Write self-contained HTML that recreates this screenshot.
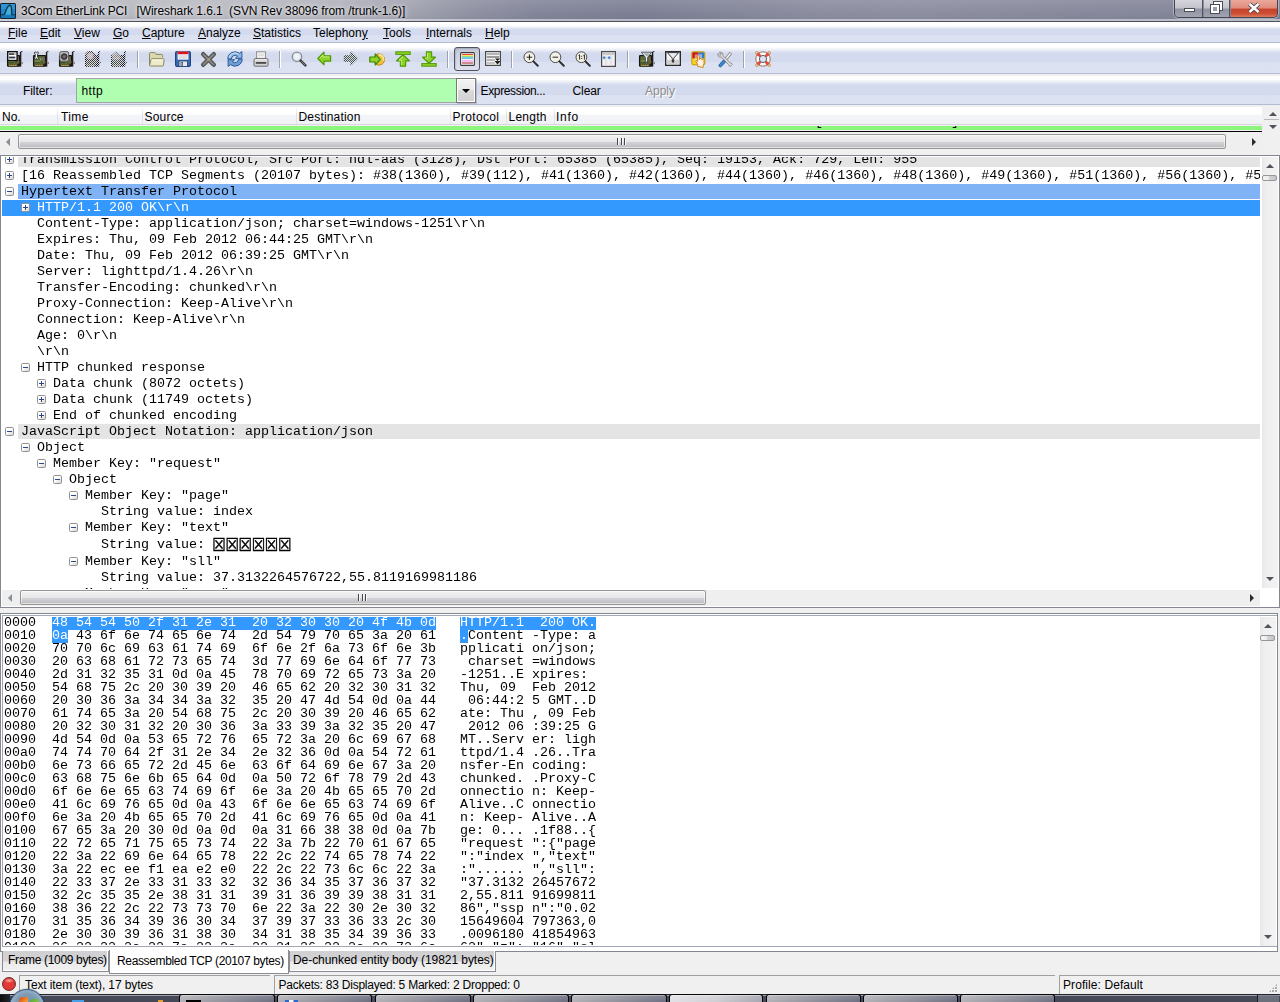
<!DOCTYPE html>
<html lang="en"><head><meta charset="utf-8"><title>3Com EtherLink PCI [Wireshark 1.6.1 (SVN Rev 38096 from /trunk-1.6)]</title>
<style>
html,body{margin:0;padding:0}
body{width:1280px;height:1002px;overflow:hidden;position:relative;background:#f0f0f0;font-family:"Liberation Sans","DejaVu Sans",sans-serif;font-size:12px;color:#000}
div,span,i,pre{box-sizing:border-box}
.abs{position:absolute}
#title{position:absolute;left:0;top:0;width:1280px;height:22px;background:linear-gradient(90deg,#b4b4bd 0,#babac2 200px,#b0b1bb 340px,#a2a3b0 410px,#9091a2 470px,#83859a 540px,#7d8095 640px,#85879b 740px,#8c8d9f 820px,#8d8ea0 920px,#898a9c 1040px,#84869a 1180px,#7f8197 1280px)}
#title .sh{position:absolute;left:0;top:0;width:1280px;height:22px;background:linear-gradient(180deg,rgba(255,255,255,.10) 0,rgba(255,255,255,0) 60%,rgba(0,0,0,.05) 100%)}
#title .l1{position:absolute;left:0;top:19px;width:1280px;height:2px;background:rgba(235,238,245,.55)}
#title .l2{position:absolute;left:0;top:21px;width:1280px;height:1px;background:#4d5058}
#title .txt{position:absolute;left:21px;top:1px;height:20px;line-height:20px;font-size:12px;white-space:pre;color:#000;text-shadow:0 0 6px rgba(255,255,255,.9),0 0 3px rgba(255,255,255,.7)}
#menubar{position:absolute;left:0;top:22px;width:1280px;height:21px;background:linear-gradient(180deg,#fff 0,#fff 3.500px,#d5dbee 7.500px,#d4daee 12.500px,#dce1f1 13.500px,#dde2f2 20px,#b4bad2 20px,#b4bad2 21px)}
#menubar span{position:absolute;top:3px;height:17px;line-height:17px;font-size:12px;white-space:pre}
#menubar u{text-decoration:underline;text-underline-offset:1px}
#toolbar{position:absolute;left:0;top:43px;width:1280px;height:31px;background:linear-gradient(180deg,#fff 0,#fff 4px,#d5dbee 10px,#d4daee 18.500px,#dce1f1 19.500px,#dde2f2 30px,#b4bad2 30px,#b4bad2 31px)}
#filterbar{position:absolute;left:0;top:76px;width:1280px;height:29px;background:linear-gradient(180deg,#fff 0,#fff 3px,#d5dbee 9px,#d4daee 18.500px,#dce1f1 19.500px,#dde2f2 28px,#b4bad2 28px,#b4bad2 29px)}
.sep{position:absolute;top:51px;width:1px;height:17px;background:#a0a0a8;box-shadow:1px 0 0 #fff}
/* tree */
#tree{position:absolute;left:0;top:155px;width:1280px;height:453px;border:1px solid #828790;background:#fff;overflow:hidden}
#treein{position:absolute;left:0;top:1px;width:1259px;height:432px;overflow:hidden;font-family:"Liberation Mono","DejaVu Sans Mono",monospace;font-size:12px}
.tr{position:absolute;white-space:pre;color:#000;padding-top:0;transform:scaleX(1.11111);transform-origin:0 0}
.tr.w{color:#fff}
.bg{position:absolute;right:0;width:auto}
.bg.g{background:#e4e4e4}
.bg.p{background:#7fb3f6}
.bg.s{background:#3399ff}
.ex{position:absolute;width:9px;height:9px;border:1px solid #919191;border-radius:1.500px;background:linear-gradient(135deg,#fff 0,#fff 40%,#d8d6cf 100%)}
.ex i{position:absolute;background:#2a4688;display:block}
.ex i.h{left:1px;top:3px;width:5px;height:1px}
.ex i.v{left:3px;top:1px;width:1px;height:5px}
.bx{position:relative;top:1px;left:-.5px;font-family:"DejaVu Sans",sans-serif;font-size:15.2px;letter-spacing:-.5px;display:inline-block;line-height:16px;transform:scale(.9,1.2);transform-origin:0 58%;vertical-align:top;-webkit-text-stroke:.35px #000}
/* hex */
#hex{position:absolute;left:0;top:613px;width:1278px;height:339px;border:1px solid #828790;background:#fff;overflow:hidden}
#hexsw{position:absolute;left:1px;top:1px;width:1275px;height:332px;border:1px solid #a3a7b3;border-right:none;background:#fff}
#hexin{position:absolute;left:0;top:0;width:1257px;height:329px;overflow:hidden}
#hexin pre{position:absolute;left:1px;top:1px;margin:0;font-family:"Liberation Mono","DejaVu Sans Mono",monospace;font-size:12px;line-height:13px;color:#000;transform:scaleX(1.11111);transform-origin:0 0}
#hexin pre b{font-weight:normal;color:#fff}
.hs{position:absolute;background:#3399ff}
/* title extras */
.appic{position:absolute;left:0;top:3px}
#capbtns{position:absolute;left:1174px;top:0;width:104px;height:18px;border:1px solid #43454f;border-top:none;border-radius:0 0 5px 5px;overflow:hidden;box-shadow:0 0 0 1px rgba(255,255,255,.35)}
.cb{position:absolute;top:0;height:18px}
.cb.min{left:0;width:28px;background:linear-gradient(180deg,#d6d6dc 0,#c2c3cc 45%,#9092a2 50%,#a4a6b4 100%);border-right:1px solid #50525c}
.cb.min i{position:absolute;left:9px;top:8px;width:11px;height:4px;background:#fff;border:1px solid #4a4c58;box-sizing:border-box}
.cb.max{left:29px;width:26px;background:linear-gradient(180deg,#d6d6dc 0,#c2c3cc 45%,#9092a2 50%,#a4a6b4 100%);border-right:1px solid #50525c}
.cb.max i{position:absolute;width:8px;height:8px;border:2px solid #fff;outline:1px solid #4a4c58;box-sizing:border-box;background:transparent}
.cb.max i.a{left:10px;top:2px}
.cb.max i.b{left:7px;top:5px;background:#9a9caa}
.cb.cls{left:56px;width:48px;background:linear-gradient(180deg,#eaa89c 0,#e08c7c 45%,#c8442c 50%,#cc4c34 75%,#e08a68 100%)}
.cb.cls svg{position:absolute;left:16px;top:2px}
/* toolbar */
.ic{position:absolute;overflow:visible}
#tgl{position:absolute;left:454px;top:47px;width:26px;height:24px;border:1px solid #50535f;border-radius:3px;background:linear-gradient(180deg,#bfc3d3 0,#cdd1df 30%,#dee1ed 100%);box-shadow:inset 1px 1px 1px rgba(0,0,0,.12)}
/* filter bar */
#filterbar .lb{position:absolute;top:7px;height:16px;line-height:16px;font-size:12px;white-space:pre}
#filterbar .lb.dis{color:#8c8c8c;text-shadow:1px 1px 0 #fff}
#fin{position:absolute;left:76px;top:2px;width:380px;height:25px;background:#b0ffb0;border:1px solid #a2a2aa;border-right:none}
#fin span{position:absolute;left:4.500px;top:4px;line-height:16px;font-size:12px;letter-spacing:.35px}
#fdd{position:absolute;left:456px;top:2px;width:20px;height:25px;border:1px solid #787878;background:linear-gradient(180deg,#f3f3f3 0,#eaeaea 48%,#dadada 50%,#d1d1d1 100%);box-shadow:inset 0 0 0 1px #fff,1px 1px 0 rgba(120,120,130,.35)}
#fdd i{position:absolute;left:5px;top:10px;width:0;height:0;border-left:4px solid transparent;border-right:4px solid transparent;border-top:4px solid #000}
/* packet list */
#plist{position:absolute;left:0;top:107px;width:1280px;height:25px}
#plist .hd{position:absolute;left:0;top:0;width:1262px;height:18px;background:linear-gradient(180deg,#fff 0,#fff 7px,#f4f5f9 8px,#f1f2f6 17px);border-bottom:1px solid #d6d8dc}
#plist .hd span{position:absolute;top:3px;line-height:15px;font-size:12px;white-space:pre}
#plist .hd i{position:absolute;top:0;width:1px;height:17px;background:linear-gradient(180deg,#fff,#dfe2e8 40%,#dfe2e8)}
#plist .grn{position:absolute;left:0;top:19px;width:1262px;height:4px;background:#8cf57c}
#plist .blk{position:absolute;left:0;top:23.500px;width:1262px;height:1.500px;background:#000}
#plist .vs{position:absolute;left:1263px;top:0;width:17px;height:25px;background:#f0f0f0}
#plist .vs b{position:absolute;left:6px;width:0;height:0;border-left:4px solid transparent;border-right:4px solid transparent}
#plist .vs b.up{top:5px;border-bottom:4px solid #50545c}
#plist .vs b.dn{top:18px;border-top:4px solid #50545c}
#plist .vs b.mid{left:1px;top:12px;width:15px;height:1px;border:none;background:#b8b8b8}
/* scrollbars */
.hsb{position:absolute;height:16px;background:#efefef}
.hsb .th{position:absolute;top:0;height:15px;border:1px solid #979797;border-radius:2px;background:linear-gradient(180deg,#f3f3f3 0,#e6e6e8 52%,#d2d2d6 58%,#c4c4c8 85%,#b9b9bd 100%);box-shadow:inset 0 0 0 1px rgba(255,255,255,.55)}
.hsb .th em{position:absolute;left:50%;top:3px;width:10px;height:7px;margin-left:-5px;background:linear-gradient(90deg,#45454a 0,#45454a 1px,#f8f8f8 1px,#f8f8f8 2px,transparent 2px,transparent 3.500px,#45454a 3.500px,#45454a 4.500px,#f8f8f8 4.500px,#f8f8f8 5.500px,transparent 5.500px,transparent 7px,#45454a 7px,#45454a 8px,#f8f8f8 8px,#f8f8f8 9px,transparent 9px)}
.hsb b{position:absolute;top:4px;width:0;height:0;border-top:4px solid transparent;border-bottom:4px solid transparent}
.hsb b.la{left:6px;border-right:4px solid #8a8e96}
.hsb b.ra{right:6px;border-left:4px solid #2a2c34}
.vsb{position:absolute;width:17px;background:linear-gradient(90deg,#e8e8e8 0,#efefef 30%,#f2f2f2 100%)}
.vsb b{position:absolute;left:4px;width:0;height:0;border-left:4px solid transparent;border-right:4px solid transparent}
.vsb b.ua{top:7px;border-bottom:4px solid #50545c}
.vsb b.da{bottom:7px;border-top:4px solid #50545c}
.vsb .vth{position:absolute;left:0;width:16px;height:6px;border:1px solid #979797;border-radius:2px;background:linear-gradient(90deg,#f5f5f5 0,#ebebeb 45%,#d2d2d6 50%,#c4c4c8 100%)}
/* tabs */
#tabs{position:absolute;left:0;top:950px;width:1280px;height:25px}
.tab{position:absolute;top:1px;height:21px;border:1px solid #898c95;border-top:none;background:linear-gradient(180deg,#d0d0d3 0,#d3d3d6 10px,#ebebeb 11px,#f0f0f0 19px,#fff 19px,#fff 20px);box-shadow:inset -1px 0 0 #fff}
.tab.act{top:0;height:24px;background:#fff;border-color:#898c95;box-shadow:none}
.tab span{position:absolute;top:1px;line-height:16px;font-size:12px;white-space:pre}
.tab.act span{top:3px}
/* status */
#status{position:absolute;left:0;top:975px;width:1280px;height:19px}
.led{position:absolute;left:2px;top:2px;width:14px;height:14px;border-radius:7px;background:radial-gradient(ellipse 5px 2.500px at 50% 22%,rgba(255,190,185,.85) 0,rgba(255,150,145,0) 100%),radial-gradient(circle at 50% 50%,#e43a36 0,#e03834 65%,#c82c2a 100%);border:1px solid #6a2a22}
.sf{position:absolute;top:0;height:19px;border-left:1px solid #a0a0a0;border-top:1px solid #a0a0a0;background:#f0f0f0}
.sf span{position:absolute;top:2px;line-height:15px;font-size:12px;white-space:pre}
.grip{position:absolute;right:3px;bottom:2px;width:8px;height:8px;background:radial-gradient(circle at 1px 1px,#a8a8a8 0,#a8a8a8 .9px,transparent 1.100px) 0 0/3px 3px;clip-path:polygon(100% 0,100% 100%,0 100%)}
/* taskbar */
#taskbar{position:absolute;left:0;top:994px;width:1280px;height:8px;background:linear-gradient(180deg,#20262a 0,#20262a 1px,#a4a4b0 1px,#a4a4b0 2px,#474a58 2px,#454856 8px)}
#taskbar .lft{position:absolute;left:0;top:1px;width:10px;height:7px;background:linear-gradient(90deg,#0c0c10,#24262c)}
#taskbar .tb{position:absolute;top:0;height:8px;border:1px solid #08080a;border-bottom:none;border-radius:3px 3px 0 0;background:linear-gradient(180deg,rgba(255,255,255,.55) 0,rgba(255,255,255,.12) 1.500px,rgba(255,255,255,0) 7px),linear-gradient(90deg,#b2b2b8 0,#92939c 45%,#6c6e80 100%)}
#taskbar .tb.a{background:linear-gradient(180deg,rgba(255,255,255,.6) 0,rgba(255,255,255,.1) 1.500px,rgba(255,255,255,0) 7px),linear-gradient(90deg,#e2e2e6 0,#cfcfd4 50%,#a6a7b0 100%)}
#taskbar .orb{position:absolute;left:9px;top:-5px;width:36px;height:36px;border-radius:18px;background:radial-gradient(circle at 50% 45%,#6e8eac 0,#7f9cb6 45%,#a9bece 75%,#c2d0dc 100%);border:1px solid #2a5888;box-shadow:0 0 1px #0a1420}
#taskbar .orb i{position:absolute;display:block}
#taskbar .orb i.r{left:9px;top:7px;width:9px;height:8px;border-radius:3px 2px 0 0;background:linear-gradient(135deg,#d84a20 0,#f08a28 60%,#f0b040 100%);transform:skewY(-8deg)}
#taskbar .orb i.g{left:20px;top:9px;width:9px;height:6px;border-radius:2px 3px 0 0;background:linear-gradient(135deg,#5aa838 0,#8cc850 100%);transform:skewY(-8deg)}
#taskbar .ti{position:absolute;top:6px;height:2px}
#taskbar .sd{position:absolute;left:1257px;top:1px;width:22px;height:7px;background:linear-gradient(180deg,#9a9ca6 0,#70737f 1px,#6a6d7a 7px);border-left:1px solid #1a1c22}
#plist .clip{position:absolute;left:814.5px;top:19px;width:160px;height:2px;overflow:hidden}
#plist .clip span{position:absolute;left:0;top:-12px;line-height:16px;white-space:pre;font-family:"Liberation Mono","DejaVu Sans Mono",monospace;font-size:12px;transform:scaleX(1.11111);transform-origin:0 0}
#taskbar .tb i{position:absolute;bottom:0;height:2px;display:block}

</style></head><body>
<div id="title"><div class="sh"></div><div class="l1"></div><div class="l2"></div>
<svg class="appic" width="16" height="16" viewBox="0 0 16 16"><rect x="0" y="0" width="16" height="16" rx="1.500" fill="#10222e"/><rect x="1" y="1" width="14" height="14" rx=".8" fill="#1c88cf"/><rect x="1" y="1" width="14" height="5" fill="#3a9bd8" opacity=".6"/><path d="M5.500 11.600C6.600 7.600 7.800 4.200 10 3.200c.8 2.800.9 5.600.9 8.400z" fill="#4fb4da" opacity=".85"/><path d="M1 11.800h2.600C5.600 11.800 6 2.800 10 2.200c1.500 0 1.700 2.900 1.900 9.600H15" fill="none" stroke="#14323e" stroke-width="1.200"/><rect x="1" y="12.500" width="14" height="2.500" fill="#1678b8"/></svg>
<div class="txt" style="left:21px;letter-spacing:-.18px">3Com EtherLink PCI</div><div class="txt" style="left:136.500px;letter-spacing:-.08px">[Wireshark 1.6.1  (SVN Rev 38096 from /trunk-1.6)]</div>
<div id="capbtns"><div class="cb min"><i></i></div><div class="cb max"><i class="a"></i><i class="b"></i></div><div class="cb cls"><svg width="14" height="12" viewBox="0 0 14 12"><path d="M2.500 2l9 8M11.500 2l-9 8" stroke="#3a3a44" stroke-width="4.200" stroke-linecap="butt"/><path d="M2.500 2l9 8M11.500 2l-9 8" stroke="#fff" stroke-width="2.600" stroke-linecap="butt"/></svg></div></div>
</div>
<div id="menubar">
<span style="left:8px"><u>F</u>ile</span><span style="left:40px"><u>E</u>dit</span><span style="left:74px"><u>V</u>iew</span><span style="left:113px"><u>G</u>o</span><span style="left:142px"><u>C</u>apture</span><span style="left:198px"><u>A</u>nalyze</span><span style="left:253px"><u>S</u>tatistics</span><span style="left:313px">Telephon<u>y</u></span><span style="left:383px"><u>T</u>ools</span><span style="left:426px"><u>I</u>nternals</span><span style="left:485px"><u>H</u>elp</span>
</div>
<div id="toolbar"></div>
<div id="tgl"></div>
<svg width="0" height="0" style="position:absolute"><defs><pattern id="chk" width="2" height="2" patternUnits="userSpaceOnUse"><rect width="2" height="2" fill="#000"/><rect width="1" height="1" fill="#fff"/><rect x="1" y="1" width="1" height="1" fill="#fff"/></pattern><mask id="dis" maskUnits="userSpaceOnUse" x="0" y="0" width="16" height="16"><rect width="16" height="16" fill="url(#chk)"/></mask></defs></svg>
<svg class="ic" style="left:7px;top:51px" width="16" height="16" viewBox="0 0 16 16"><rect x="0.6" y="4.6" width="12" height="10.6" rx="0.6" fill="#5e6d37" stroke="#161616" stroke-width="1.3"/>
<rect x="1.6" y="9.6" width="5.4" height=".9" fill="#8a965a"/><rect x="1.8" y="11.3" width="5" height="1" fill="#3c4726"/><rect x="8.4" y="10" width="1" height="3" fill="#454f2c"/><rect x="10.4" y="12.8" width="2" height="2.2" fill="#1c1c1c"/>
<rect x="2" y="13.6" width="8" height="1.4" fill="#1c1c1c"/><path d="M2.2 14.3h7.6" stroke="#e2c050" stroke-width="1.2" stroke-dasharray="1.4 .6"/>
<rect x="10.6" y="7.6" width="1" height="1.4" fill="#c8407a"/><rect x="12" y="10.4" width="1" height="1.2" fill="#b03060"/>
<path d="M13.6 .8v14.8" stroke="#1c1c1c" stroke-width="1.4"/><path d="M13.6 1.2q.6-.8 1.8-.6" stroke="#1c1c1c" stroke-width="1" fill="none"/>
<rect x="14.2" y="11" width="1.8" height="2" fill="#8a8a8a"/><rect x=".7" y=".7" width="9.4" height="8.8" fill="#fff" stroke="#111" stroke-width="1.4"/>
<rect x="2" y="2.2" width="5.4" height="1.8" fill="#4a4a4a"/><rect x="2" y="5.6" width="6" height="1.8" fill="#333"/><rect x="1.6" y="5.8" width=".8" height="1.4" fill="#3a8ad8"/><rect x="7.8" y="5.8" width=".8" height="1.4" fill="#3a8ad8"/><rect x="8" y="2.4" width=".8" height="1.4" fill="#999"/></svg>
<svg class="ic" style="left:33px;top:51px" width="16" height="16" viewBox="0 0 16 16"><rect x="0.6" y="4.6" width="12" height="10.6" rx="0.6" fill="#5e6d37" stroke="#161616" stroke-width="1.3"/>
<rect x="1.6" y="9.6" width="5.4" height=".9" fill="#8a965a"/><rect x="1.8" y="11.3" width="5" height="1" fill="#3c4726"/><rect x="8.4" y="10" width="1" height="3" fill="#454f2c"/><rect x="10.4" y="12.8" width="2" height="2.2" fill="#1c1c1c"/>
<rect x="2" y="13.6" width="8" height="1.4" fill="#1c1c1c"/><path d="M2.2 14.3h7.6" stroke="#e2c050" stroke-width="1.2" stroke-dasharray="1.4 .6"/>
<rect x="10.6" y="7.6" width="1" height="1.4" fill="#c8407a"/><rect x="12" y="10.4" width="1" height="1.2" fill="#b03060"/>
<path d="M13.6 .8v14.8" stroke="#1c1c1c" stroke-width="1.4"/><path d="M13.6 1.2q.6-.8 1.8-.6" stroke="#1c1c1c" stroke-width="1" fill="none"/>
<rect x="14.2" y="11" width="1.8" height="2" fill="#8a8a8a"/><path d="M2.2 .8l1.2 1 1.2-1 .9 1.2-.9 1.1v3l.9 1.1-.9 1.2-1.2-1-1.2 1-.9-1.2.9-1.1v-3L1.3 2z" fill="#fff" stroke="#222" stroke-width=".9"/>
<rect x="7" y="7.4" width=".9" height="1.8" fill="#aab"/><rect x="8.8" y="7.4" width=".9" height="1.8" fill="#88a"/></svg>
<svg class="ic" style="left:59px;top:51px" width="16" height="16" viewBox="0 0 16 16"><rect x="0.6" y="4.6" width="12" height="10.6" rx="0.6" fill="#5e6d37" stroke="#161616" stroke-width="1.3"/>
<rect x="1.6" y="9.6" width="5.4" height=".9" fill="#8a965a"/><rect x="1.8" y="11.3" width="5" height="1" fill="#3c4726"/><rect x="8.4" y="10" width="1" height="3" fill="#454f2c"/><rect x="10.4" y="12.8" width="2" height="2.2" fill="#1c1c1c"/>
<rect x="2" y="13.6" width="8" height="1.4" fill="#1c1c1c"/><path d="M2.2 14.3h7.6" stroke="#e2c050" stroke-width="1.2" stroke-dasharray="1.4 .6"/>
<rect x="10.6" y="7.6" width="1" height="1.4" fill="#c8407a"/><rect x="12" y="10.4" width="1" height="1.2" fill="#b03060"/>
<path d="M13.6 .8v14.8" stroke="#1c1c1c" stroke-width="1.4"/><path d="M13.6 1.2q.6-.8 1.8-.6" stroke="#1c1c1c" stroke-width="1" fill="none"/>
<rect x="14.2" y="11" width="1.8" height="2" fill="#8a8a8a"/><rect x=".8" y=".6" width="8.8" height="9.6" rx="1.6" fill="#bdbdbd" stroke="#5a5a5a" stroke-width="1"/>
<circle cx="5.2" cy="5.6" r="2.9" fill="#4a4a4a" stroke="#222" stroke-width=".8"/><circle cx="5.2" cy="5.6" r="1.3" fill="#777"/><rect x="4.8" y="5.8" width=".9" height=".9" fill="#d03070"/></svg>
<svg class="ic" style="left:85px;top:51px" width="16" height="16" viewBox="0 0 16 16"><g mask="url(#dis)"><g style="filter:saturate(.55) brightness(.72)"><rect x="0.6" y="4.6" width="12" height="10.6" rx="0.6" fill="#5e6d37" stroke="#161616" stroke-width="1.3"/>
<rect x="1.6" y="9.6" width="5.4" height=".9" fill="#8a965a"/><rect x="1.8" y="11.3" width="5" height="1" fill="#3c4726"/><rect x="8.4" y="10" width="1" height="3" fill="#454f2c"/><rect x="10.4" y="12.8" width="2" height="2.2" fill="#1c1c1c"/>
<rect x="2" y="13.6" width="8" height="1.4" fill="#1c1c1c"/><path d="M2.2 14.3h7.6" stroke="#e2c050" stroke-width="1.2" stroke-dasharray="1.4 .6"/>
<rect x="10.6" y="7.6" width="1" height="1.4" fill="#c8407a"/><rect x="12" y="10.4" width="1" height="1.2" fill="#b03060"/>
<path d="M13.6 .8v14.8" stroke="#1c1c1c" stroke-width="1.4"/><path d="M13.6 1.2q.6-.8 1.8-.6" stroke="#1c1c1c" stroke-width="1" fill="none"/>
<rect x="14.2" y="11" width="1.8" height="2" fill="#8a8a8a"/><circle cx="5.200" cy="5.200" r="5" fill="#b2481e" stroke="#5a2a10" stroke-width=".8"/><circle cx="5.200" cy="5" r="3.200" fill="#f6dcd4"/><circle cx="5.200" cy="5" r="1.600" fill="#fff"/></g></g></svg>
<svg class="ic" style="left:111px;top:51px" width="16" height="16" viewBox="0 0 16 16"><g mask="url(#dis)"><g style="filter:saturate(.55) brightness(.72)"><rect x="0.6" y="4.6" width="12" height="10.6" rx="0.6" fill="#5e6d37" stroke="#161616" stroke-width="1.3"/>
<rect x="1.6" y="9.6" width="5.4" height=".9" fill="#8a965a"/><rect x="1.8" y="11.3" width="5" height="1" fill="#3c4726"/><rect x="8.4" y="10" width="1" height="3" fill="#454f2c"/><rect x="10.4" y="12.8" width="2" height="2.2" fill="#1c1c1c"/>
<rect x="2" y="13.6" width="8" height="1.4" fill="#1c1c1c"/><path d="M2.2 14.3h7.6" stroke="#e2c050" stroke-width="1.2" stroke-dasharray="1.4 .6"/>
<rect x="10.6" y="7.6" width="1" height="1.4" fill="#c8407a"/><rect x="12" y="10.4" width="1" height="1.2" fill="#b03060"/>
<path d="M13.6 .8v14.8" stroke="#1c1c1c" stroke-width="1.4"/><path d="M13.6 1.2q.6-.8 1.8-.6" stroke="#1c1c1c" stroke-width="1" fill="none"/>
<rect x="14.2" y="11" width="1.8" height="2" fill="#8a8a8a"/><path d="M1 9V4.5L5 .8l4.2 3.7V9z" fill="#d8d8d8" stroke="#666" stroke-width=".8"/><path d="M2 6.2l1.6-1.6 1.6 1.6 1.6-1.6 1.6 1.6" stroke="#f0a030" stroke-width="1.4" fill="none"/><rect x="7.6" y="8" width="1" height="1" fill="#d03070"/></g></g></svg>
<svg class="ic" style="left:148px;top:51px" width="16" height="16" viewBox="0 0 16 16"><path d="M1.5 14.2V2.6q0-1 1-1h4q.9 0 1.2.9l.3.9h5.6q1 0 1 1v2" fill="#d9d8b0" stroke="#8b865c" stroke-width="1"/>
<path d="M1.5 14.4q0 .6.7.6h12.4q.8 0 .9-.8l.6-5.6q.1-.9-.9-.9H4.200q-.9 0-1.100.9z" fill="#ecebcc" stroke="#8b865c" stroke-width="1"/>
<path d="M3.600 9h11.400" stroke="#fbfbe8" stroke-width="1"/></svg>
<svg class="ic" style="left:175px;top:51px" width="16" height="16" viewBox="0 0 16 16"><rect x=".6" y=".6" width="14.8" height="14.8" rx="1.4" fill="#3f6fb5" stroke="#1d4488" stroke-width="1.2"/>
<rect x="2.600" y="0.6" width="10.800" height="8" fill="#f4f4f4"/><rect x="2.600" y=".6" width="10.800" height="2.600" fill="#d8141c"/>
<path d="M3.600 5h8.800M3.600 6.800h8.800" stroke="#c8c8c8" stroke-width=".8"/>
<rect x="4" y="10" width="8.400" height="5.400" fill="#e8e8e8" stroke="#1d3f7a" stroke-width=".8"/><rect x="5.600" y="11.200" width="2.400" height="3.400" fill="#2a3a55"/><rect x="6.300" y="11.800" width="1" height="2.200" fill="#dde"/></svg>
<svg class="ic" style="left:201px;top:51px" width="16" height="16" viewBox="0 0 16 16"><path d="M2.200 3.200L12.800 13.800M12.800 3.200L2.200 13.800" stroke="#4a4a4a" stroke-width="4.400" stroke-linecap="round"/>
<path d="M2.400 3.400L12.600 13.600M12.600 3.400L2.400 13.600" stroke="#7a7a7a" stroke-width="2.600" stroke-linecap="round"/>
<path d="M3 4l9 9M12 4l-9 9" stroke="#8c8c84" stroke-width="1" stroke-linecap="round"/><circle cx="7.500" cy="8.500" r="1" fill="#b8b070"/></svg>
<svg class="ic" style="left:227px;top:51px" width="16" height="16" viewBox="0 0 16 16"><path d="M.8 8A7.200 7.200 0 0 1 12.400 2.300L14.900.600V7.300H8.400L10.500 5.100A3.800 3.800 0 0 0 4.400 8z" fill="#8db7e2" stroke="#2a5c9e" stroke-width="1" stroke-linejoin="round"/>
<path d="M15.200 8A7.200 7.200 0 0 1 3.600 13.700L1.100 15.400V8.700H7.600L5.500 10.900A3.800 3.800 0 0 0 11.600 8z" fill="#6f9fd2" stroke="#2a5c9e" stroke-width="1" stroke-linejoin="round"/>
<path d="M2.200 7A5.800 5.800 0 0 1 11.600 3.300" stroke="#d6e6f6" stroke-width="1" fill="none"/></svg>
<svg class="ic" style="left:253px;top:51px" width="16" height="16" viewBox="0 0 16 16"><rect x="3.600" y=".8" width="8.800" height="7" fill="#fbfbfb" stroke="#8a8a8a" stroke-width="1"/><path d="M5.200 3h5.600M5.200 4.800h5.600" stroke="#c8c8c8" stroke-width=".9"/>
<path d="M1 14.400V9.200q0-1.800 1.800-1.800h10.400q1.800 0 1.800 1.800v5.200q0 .8-.8.800H1.800q-.8 0-.8-.8z" fill="#d4d4d4" stroke="#6e6e6e" stroke-width="1"/>
<rect x="2.800" y="11" width="10.400" height="1.800" fill="#4a4a4a"/><path d="M2 8.800h12" stroke="#f4f4f4" stroke-width="1"/></svg>
<svg class="ic" style="left:291px;top:51px" width="16" height="16" viewBox="0 0 16 16"><circle cx="6" cy="5.800" r="4.700" fill="#eef4fa" stroke="#8a8e94" stroke-width="1.400"/><path d="M3.400 5.200a2.800 2.800 0 0 1 2.800-2.400" stroke="#fff" stroke-width="1.400" fill="none"/><circle cx="6" cy="5.800" r="3.400" fill="none" stroke="#cfe0ee" stroke-width="1"/>
<path d="M9.600 9.600l4.800 4.800" stroke="#3a3a3a" stroke-width="2.600" stroke-linecap="round"/><path d="M10.400 10.400l3.600 3.600" stroke="#8a8a8a" stroke-width=".9" stroke-linecap="round"/></svg>
<svg class="ic" style="left:317px;top:51px" width="16" height="16" viewBox="0 0 16 16"><path d="M.8 7.500L7 1.200v3.600h6.600v5.400H7v3.600z" fill="#8ed22a" stroke="#4f9a06" stroke-width="1.200" stroke-linejoin="round"/><path d="M2.600 7.400l3.400-3.500v2h6.400" stroke="#c4ee78" stroke-width="1" fill="none"/></svg>
<svg class="ic" style="left:343px;top:51px" width="16" height="16" viewBox="0 0 16 16"><g mask="url(#dis)"><g style="filter:saturate(.55) brightness(.72)"><path d="M14.200 7.500L8 1.200v3.600H1.400v5.400H8v3.600z" fill="#6a7f52" stroke="#4a6a30" stroke-width="1.200" stroke-linejoin="round"/></g></g></svg>
<svg class="ic" style="left:369px;top:51px" width="16" height="16" viewBox="0 0 16 16"><circle cx="10" cy="8.500" r="5.600" fill="#f0c040" stroke="#c08810" stroke-width="1"/><path d="M10 3.600a5 5 0 0 1 4.600 6" stroke="#fbe9a0" stroke-width="1.600" fill="none"/>
<path d="M11.200 8.500L6.200 3v3H.8v5h5.400v3z" fill="#8ed22a" stroke="#3f8a06" stroke-width="1.200" stroke-linejoin="round"/></svg>
<svg class="ic" style="left:395px;top:51px" width="16" height="16" viewBox="0 0 16 16"><rect x=".8" y=".8" width="14.400" height="2.600" fill="#8ed22a" stroke="#4f9a06" stroke-width="1"/><path d="M8 3.800l6.400 6H10.600v5.400H5.400V9.800H1.600z" fill="#8ed22a" stroke="#4f9a06" stroke-width="1.200" stroke-linejoin="round"/><path d="M8 5.600L4 9.200h2.400v5" stroke="#c4ee78" stroke-width="1" fill="none"/></svg>
<svg class="ic" style="left:421px;top:51px" width="16" height="16" viewBox="0 0 16 16"><rect x=".8" y="12.600" width="14.400" height="2.600" fill="#8ed22a" stroke="#4f9a06" stroke-width="1"/><path d="M8 12.200l6.400-6H10.600V.8H5.400v5.400H1.600z" fill="#8ed22a" stroke="#4f9a06" stroke-width="1.200" stroke-linejoin="round"/><path d="M6.400 1.800v5.400H4" stroke="#c4ee78" stroke-width="1" fill="none"/></svg>
<svg class="ic" style="left:459px;top:51px" width="16" height="16" viewBox="0 0 16 16"><rect x="1.600" y="1.600" width="13.800" height="12.800" rx="1" fill="#fff" stroke="#3a3a3a" stroke-width="1.100"/>
<rect x="3" y="3" width="11" height="1.100" fill="#e84040"/><rect x="3" y="4.100" width="11" height="1.200" fill="#f4ec50"/><rect x="3" y="5.300" width="11" height="1" fill="#70c860"/><rect x="3" y="6.300" width="11" height="1.700" fill="#60c4e4"/><rect x="3" y="8.800" width="11" height="2" fill="#f4b4f4"/><rect x="3" y="11.400" width="11" height="1.200" fill="#a84848"/></svg>
<svg class="ic" style="left:485px;top:51px" width="16" height="16" viewBox="0 0 16 16"><rect x=".6" y=".6" width="14.800" height="13.800" fill="#f4f4f4" stroke="#4a4a4a" stroke-width="1.200"/>
<rect x="1.800" y="2" width="12.400" height="2" fill="#b4b4b4"/><rect x="1.800" y="5" width="12.400" height="2" fill="#9a9a9a"/><rect x="1.800" y="8" width="8" height="2" fill="#b4b4b4"/><rect x="1.800" y="11" width="8" height="2" fill="#c4c4c4"/>
<path d="M10 7.400h5l-2.500 2.600zM10 10.600h5l-2.500 2.800z" fill="#1a1a1a"/><rect x="10" y="10" width="5" height=".9" fill="#1a1a1a"/></svg>
<svg class="ic" style="left:523px;top:51px" width="16" height="16" viewBox="0 0 16 16"><circle cx="6.400" cy="6.200" r="5.400" fill="#f4f2e6" stroke="#4a4a4a" stroke-width="1"/><path d="M10.400 10.400l4.400 4.400" stroke="#2e2e2e" stroke-width="2" stroke-linecap="round"/><path d="M3.600 6.200h5.600M6.400 3.400v5.600" stroke="#222" stroke-width="1"/></svg>
<svg class="ic" style="left:549px;top:51px" width="16" height="16" viewBox="0 0 16 16"><circle cx="6.400" cy="6.200" r="5.400" fill="#f4f2e6" stroke="#4a4a4a" stroke-width="1"/><path d="M10.400 10.400l4.400 4.400" stroke="#2e2e2e" stroke-width="2" stroke-linecap="round"/><path d="M3.600 6.200h5.600" stroke="#222" stroke-width="1"/></svg>
<svg class="ic" style="left:575px;top:51px" width="16" height="16" viewBox="0 0 16 16"><circle cx="6.400" cy="6.200" r="5.400" fill="#f4f2e6" stroke="#4a4a4a" stroke-width="1"/><path d="M10.400 10.400l4.400 4.400" stroke="#2e2e2e" stroke-width="2" stroke-linecap="round"/><path d="M3.600 4.400l1-.6v4.800M8.400 4.400l1-.6v4.800" stroke="#222" stroke-width="1" fill="none"/><rect x="6.200" y="4.800" width="1" height="1" fill="#222"/><rect x="6.200" y="7" width="1" height="1" fill="#222"/></svg>
<svg class="ic" style="left:601px;top:51px" width="16" height="16" viewBox="0 0 16 16"><rect x=".6" y=".6" width="13.800" height="14.800" fill="#f0f0f0" stroke="#4a4a4a" stroke-width="1.200"/><rect x="1.200" y="1.200" width="12.600" height="2.600" fill="#c0c0c0"/>
<path d="M5 1.200v13.600M10 1.200v13.600" stroke="#d8d8d8" stroke-width="1"/><path d="M1.600 6.800h3M3.100 5.300v3M6.600 6.800h3M8.100 5.300v3" stroke="#2a78d8" stroke-width="1.100"/></svg>
<svg class="ic" style="left:639px;top:51px" width="16" height="16" viewBox="0 0 16 16"><rect x="0.6" y="4.6" width="12" height="10.6" rx="0.6" fill="#5e6d37" stroke="#161616" stroke-width="1.3"/>
<rect x="1.6" y="9.6" width="5.4" height=".9" fill="#8a965a"/><rect x="1.8" y="11.3" width="5" height="1" fill="#3c4726"/><rect x="8.4" y="10" width="1" height="3" fill="#454f2c"/><rect x="10.4" y="12.8" width="2" height="2.2" fill="#1c1c1c"/>
<rect x="2" y="13.6" width="8" height="1.4" fill="#1c1c1c"/><path d="M2.2 14.3h7.6" stroke="#e2c050" stroke-width="1.2" stroke-dasharray="1.4 .6"/>
<rect x="10.6" y="7.6" width="1" height="1.4" fill="#c8407a"/><rect x="12" y="10.4" width="1" height="1.2" fill="#b03060"/>
<path d="M13.6 .8v14.8" stroke="#1c1c1c" stroke-width="1.4"/><path d="M13.6 1.2q.6-.8 1.8-.6" stroke="#1c1c1c" stroke-width="1" fill="none"/>
<rect x="14.2" y="11" width="1.8" height="2" fill="#8a8a8a"/><path d="M2.400 1.200h10.200L8.600 6.400V11H6.400V6.400z" fill="#e8eef2" stroke="#4a4a4a" stroke-width=".9"/><path d="M4.600 2.200h6L8 5.600z" fill="#9aa"/></svg>
<svg class="ic" style="left:665px;top:51px" width="16" height="16" viewBox="0 0 16 16"><rect x=".7" y=".7" width="14.600" height="13.600" fill="#f6f6f6" stroke="#2a2a2a" stroke-width="1.400"/><rect x="1.600" y="8.800" width="12.800" height="4.600" fill="#d0d0d0"/>
<path d="M2.400 1.600h11.200L8.700 7.200v4H7.300v-4z" fill="#e8eef2" stroke="#3a3a3a" stroke-width="1"/><rect x="7.300" y="9" width="1.400" height="1.600" fill="#222"/></svg>
<svg class="ic" style="left:691px;top:51px" width="16" height="16" viewBox="0 0 16 16"><rect x=".8" y=".8" width="13" height="13" rx="1.200" fill="#f6d028" stroke="#c09a10" stroke-width="1"/><rect x="1.400" y="1.400" width="6" height="6" fill="#cc1010"/><rect x="7.400" y="1.400" width="5.800" height="6" fill="#3a78c8"/><rect x="3.600" y="3.400" width="7.400" height="6.200" fill="#e8eef8" opacity=".55"/>
<path d="M6.600 15.400v-2.200L5 10.600q-.6-1 .4-1.200l1.200 1.200V5.600q0-1 .9-1t.9 1v3.200l.2-1.200q.9-.3 1.500.5.900-.3 1.500.5.900-.2 1.400.7v3.200l-.8 2v1.900z" fill="#fff4e6" stroke="#d88410" stroke-width="1"/></svg>
<svg class="ic" style="left:717px;top:51px" width="16" height="16" viewBox="0 0 16 16"><path d="M12.800 1.200L7 8.400 2.600 13.200q-.8 1 .2 1.800t1.800-.2L9 9.800 14.600 3z" fill="#e8e8e8" stroke="#8a8a8a" stroke-width="1"/>
<path d="M2 1.400q2-.8 3.400.6.900 1.200.4 2.400l7.400 7.600q1.600-.2 2.200 1.200l-1.800 2.200q-1.800-.2-2-1.800L4.200 6q-1.600.6-2.800-.6Q.4 4 1 2.600l1.600 1.600 1.200-.4.400-1.200z" fill="#dcdcdc" stroke="#8a8a8a" stroke-width=".9"/>
<path d="M6.600 9.200l-4.400 4.600q-.8 1 .2 1.800t1.800-.2l4.400-4.400z" fill="#3a8ad8" stroke="#1d5a9a" stroke-width=".9"/></svg>
<svg class="ic" style="left:755px;top:51px" width="16" height="16" viewBox="0 0 16 16"><circle cx="8" cy="8" r="7.200" fill="#fafafa" stroke="#a8a8a8" stroke-width="1"/>
<g fill="#ea4a3c"><path d="M8 8L11.880 1A8 8 0 0 1 15 4.120z" transform="rotate(0 8 8)"/><path d="M8 8L11.880 1A8 8 0 0 1 15 4.120z" transform="rotate(90 8 8)"/><path d="M8 8L11.880 1A8 8 0 0 1 15 4.120z" transform="rotate(180 8 8)"/><path d="M8 8L11.880 1A8 8 0 0 1 15 4.120z" transform="rotate(270 8 8)"/></g>
<circle cx="8" cy="8" r="7.200" fill="none" stroke="#b06a50" stroke-width=".8" opacity=".7"/>
<circle cx="8" cy="8" r="3.600" fill="#dde3f3" stroke="#5a5e66" stroke-width="1"/>
<g fill="none" stroke="#c89040" stroke-width=".9"><circle cx="1.800" cy="1.800" r="1.300"/><circle cx="14.200" cy="1.800" r="1.300"/><circle cx="1.800" cy="14.200" r="1.300"/><circle cx="14.200" cy="14.200" r="1.300"/></g></svg>
<div class="sep" style="left:137px"></div>
<div class="sep" style="left:279px"></div>
<div class="sep" style="left:447px"></div>
<div class="sep" style="left:511px"></div>
<div class="sep" style="left:627px"></div>
<div class="sep" style="left:743px"></div>
<div id="filterbar">
<span class="lb" style="left:23px;letter-spacing:-.08px">Filter:</span>
<div id="fin"><span>http</span></div>
<div id="fdd"><i></i></div>
<span class="lb" style="left:480.500px;letter-spacing:-.35px">Expression...</span><span class="lb" style="left:572.500px;letter-spacing:-.1px">Clear</span><span class="lb dis" style="left:645px">Apply</span>
</div>
<div id="plist">
<div class="hd"><span style="left:2px">No.</span><span style="left:61px;letter-spacing:.4px">Time</span><span style="left:144.500px;letter-spacing:.2px">Source</span><span style="left:298.500px;letter-spacing:.18px">Destination</span><span style="left:452.500px;letter-spacing:.35px">Protocol</span><span style="left:508.500px;letter-spacing:.25px">Length</span><span style="left:556px;letter-spacing:.7px">Info</span>
<i style="left:57px"></i><i style="left:142px"></i><i style="left:296px"></i><i style="left:450px"></i><i style="left:506px"></i><i style="left:554px"></i></div>
<div class="grn"></div><div class="blk"></div><div class="clip"><span>[TCP Out-Of-Order]</span></div>
<div class="vs"><b class="up"></b><b class="mid"></b><b class="dn"></b></div>
</div>
<div class="hsb" style="left:0;top:134px;width:1262px"><b class="la"></b><div class="th" style="left:18px;width:1208px"><em></em></div><b class="ra"></b></div>
<div id="tree"><div id="treein">
<div class="bg g" style="left:17px;top:-5px;height:15px"></div><div class="ex" style="left:4px;top:-2px"><i class="h"></i><i class="v"></i></div><div class="tr" style="left:20px;top:-5px;height:16px;line-height:16px">Transmission Control Protocol, Src Port: ndl-aas (3128), Dst Port: 65385 (65385), Seq: 19153, Ack: 729, Len: 955</div>
<div class="ex" style="left:4px;top:14px"><i class="h"></i><i class="v"></i></div><div class="tr" style="left:20px;top:11px;height:16px;line-height:16px">[16 Reassembled TCP Segments (20107 bytes): #38(1360), #39(112), #41(1360), #42(1360), #44(1360), #46(1360), #48(1360), #49(1360), #51(1360), #56(1360), #57(1360),</div>
<div class="bg p" style="left:17px;top:27px;height:15px"></div><div class="ex" style="left:4px;top:30px"><i class="h"></i></div><div class="tr" style="left:20px;top:27px;height:16px;line-height:16px">Hypertext Transfer Protocol</div>
<div class="bg s" style="left:1px;top:43px;height:16px"></div><div class="ex" style="left:20px;top:46px"><i class="h"></i><i class="v"></i></div><div class="tr w" style="left:36px;top:43px;height:16px;line-height:16px">HTTP/1.1 200 OK\r\n</div>
<div class="tr" style="left:36px;top:59px;height:16px;line-height:16px">Content-Type: application/json; charset=windows-1251\r\n</div>
<div class="tr" style="left:36px;top:75px;height:16px;line-height:16px">Expires: Thu, 09 Feb 2012 06:44:25 GMT\r\n</div>
<div class="tr" style="left:36px;top:91px;height:16px;line-height:16px">Date: Thu, 09 Feb 2012 06:39:25 GMT\r\n</div>
<div class="tr" style="left:36px;top:107px;height:16px;line-height:16px">Server: lighttpd/1.4.26\r\n</div>
<div class="tr" style="left:36px;top:123px;height:16px;line-height:16px">Transfer-Encoding: chunked\r\n</div>
<div class="tr" style="left:36px;top:139px;height:16px;line-height:16px">Proxy-Connection: Keep-Alive\r\n</div>
<div class="tr" style="left:36px;top:155px;height:16px;line-height:16px">Connection: Keep-Alive\r\n</div>
<div class="tr" style="left:36px;top:171px;height:16px;line-height:16px">Age: 0\r\n</div>
<div class="tr" style="left:36px;top:187px;height:16px;line-height:16px">\r\n</div>
<div class="ex" style="left:20px;top:206px"><i class="h"></i></div><div class="tr" style="left:36px;top:203px;height:16px;line-height:16px">HTTP chunked response</div>
<div class="ex" style="left:36px;top:222px"><i class="h"></i><i class="v"></i></div><div class="tr" style="left:52px;top:219px;height:16px;line-height:16px">Data chunk (8072 octets)</div>
<div class="ex" style="left:36px;top:238px"><i class="h"></i><i class="v"></i></div><div class="tr" style="left:52px;top:235px;height:16px;line-height:16px">Data chunk (11749 octets)</div>
<div class="ex" style="left:36px;top:254px"><i class="h"></i><i class="v"></i></div><div class="tr" style="left:52px;top:251px;height:16px;line-height:16px">End of chunked encoding</div>
<div class="bg g" style="left:17px;top:267px;height:15px"></div><div class="ex" style="left:4px;top:270px"><i class="h"></i></div><div class="tr" style="left:20px;top:267px;height:16px;line-height:16px">JavaScript Object Notation: application/json</div>
<div class="ex" style="left:20px;top:286px"><i class="h"></i></div><div class="tr" style="left:36px;top:283px;height:16px;line-height:16px">Object</div>
<div class="ex" style="left:36px;top:302px"><i class="h"></i></div><div class="tr" style="left:52px;top:299px;height:16px;line-height:16px">Member Key: "request"</div>
<div class="ex" style="left:52px;top:318px"><i class="h"></i></div><div class="tr" style="left:68px;top:315px;height:16px;line-height:16px">Object</div>
<div class="ex" style="left:68px;top:334px"><i class="h"></i></div><div class="tr" style="left:84px;top:331px;height:16px;line-height:16px">Member Key: "page"</div>
<div class="tr" style="left:100px;top:347px;height:16px;line-height:16px">String value: index</div>
<div class="ex" style="left:68px;top:366px"><i class="h"></i></div><div class="tr" style="left:84px;top:363px;height:16px;line-height:16px">Member Key: "text"</div>
<div class="tr" style="left:100px;top:379px;height:18px;line-height:18px">String value: <span class="bx">☒☒☒☒☒☒</span></div>
<div class="ex" style="left:68px;top:400px"><i class="h"></i></div><div class="tr" style="left:84px;top:397px;height:16px;line-height:16px">Member Key: "sll"</div>
<div class="tr" style="left:100px;top:413px;height:16px;line-height:16px">String value: 37.3132264576722,55.8119169981186</div>
<div class="ex" style="left:68px;top:432px"><i class="h"></i></div><div class="tr" style="left:84px;top:429px;height:16px;line-height:16px">Member Key: "sspn"</div>
</div><div class="vsb" style="left:1261px;top:1px;height:431px;width:16px"><b class="ua"></b><div class="vth" style="top:18px;width:15px"></div><b class="da"></b></div>
<div class="hsb" style="left:1px;top:434px;width:1258px"><b class="la"></b><div class="th" style="left:18px;width:686px"><em></em></div><b class="ra"></b></div>
</div>
<div id="hex"><div id="hexsw"><div id="hexin">
<div class="hs" style="left:49px;top:1px;width:384px;height:13px"></div><div class="hs" style="left:49px;top:14px;width:16px;height:13px"></div><div class="hs" style="left:457px;top:1px;width:136px;height:13px"></div><div class="hs" style="left:457px;top:14px;width:8px;height:13px"></div><pre>0000  <b>48 54 54 50 2f 31 2e 31  20 32 30 30 20 4f 4b 0d</b>   <b>HTTP/1.1  200 OK.</b>
0010  <b>0a</b> 43 6f 6e 74 65 6e 74  2d 54 79 70 65 3a 20 61   <b>.</b>Content -Type: a
0020  70 70 6c 69 63 61 74 69  6f 6e 2f 6a 73 6f 6e 3b   pplicati on/json;
0030  20 63 68 61 72 73 65 74  3d 77 69 6e 64 6f 77 73    charset =windows
0040  2d 31 32 35 31 0d 0a 45  78 70 69 72 65 73 3a 20   -1251..E xpires: 
0050  54 68 75 2c 20 30 39 20  46 65 62 20 32 30 31 32   Thu, 09  Feb 2012
0060  20 30 36 3a 34 34 3a 32  35 20 47 4d 54 0d 0a 44    06:44:2 5 GMT..D
0070  61 74 65 3a 20 54 68 75  2c 20 30 39 20 46 65 62   ate: Thu , 09 Feb
0080  20 32 30 31 32 20 30 36  3a 33 39 3a 32 35 20 47    2012 06 :39:25 G
0090  4d 54 0d 0a 53 65 72 76  65 72 3a 20 6c 69 67 68   MT..Serv er: ligh
00a0  74 74 70 64 2f 31 2e 34  2e 32 36 0d 0a 54 72 61   ttpd/1.4 .26..Tra
00b0  6e 73 66 65 72 2d 45 6e  63 6f 64 69 6e 67 3a 20   nsfer-En coding: 
00c0  63 68 75 6e 6b 65 64 0d  0a 50 72 6f 78 79 2d 43   chunked. .Proxy-C
00d0  6f 6e 6e 65 63 74 69 6f  6e 3a 20 4b 65 65 70 2d   onnectio n: Keep-
00e0  41 6c 69 76 65 0d 0a 43  6f 6e 6e 65 63 74 69 6f   Alive..C onnectio
00f0  6e 3a 20 4b 65 65 70 2d  41 6c 69 76 65 0d 0a 41   n: Keep- Alive..A
0100  67 65 3a 20 30 0d 0a 0d  0a 31 66 38 38 0d 0a 7b   ge: 0... .1f88..{
0110  22 72 65 71 75 65 73 74  22 3a 7b 22 70 61 67 65   "request ":{"page
0120  22 3a 22 69 6e 64 65 78  22 2c 22 74 65 78 74 22   ":"index ","text"
0130  3a 22 ec ee f1 ea e2 e0  22 2c 22 73 6c 6c 22 3a   :"...... ","sll":
0140  22 33 37 2e 33 31 33 32  32 36 34 35 37 36 37 32   "37.3132 26457672
0150  32 2c 35 35 2e 38 31 31  39 31 36 39 39 38 31 31   2,55.811 91699811
0160  38 36 22 2c 22 73 73 70  6e 22 3a 22 30 2e 30 32   86","ssp n":"0.02
0170  31 35 36 34 39 36 30 34  37 39 37 33 36 33 2c 30   15649604 797363,0
0180  2e 30 30 39 36 31 38 30  34 31 38 35 34 39 36 33   .0096180 41854963
0190  36 32 22 2c 22 7a 22 3a  22 31 36 22 2c 22 73 6c   62","z": "16","sl
</pre></div><div class="vsb" style="left:1257px;top:1px;height:329px;width:16px"><b class="ua"></b><div class="vth" style="top:18px;width:15px"></div><b class="da"></b></div>
</div></div>
<div id="tabs">
<div class="tab" style="left:2px;width:107px"><span style="left:5px;letter-spacing:-.33px">Frame (1009 bytes)</span></div>
<div class="tab act" style="left:109px;width:180px"><span style="left:7px;letter-spacing:-.35px">Reassembled TCP (20107 bytes)</span></div>
<div class="tab" style="left:289px;width:207px"><span style="left:3px;letter-spacing:-.06px">De-chunked entity body (19821 bytes)</span></div>
</div>
<div id="status">
<div class="led"></div>
<div class="sf" style="left:19px;width:251px"><span style="left:5px;letter-spacing:-.11px">Text item (text), 17 bytes</span></div>
<div class="sf" style="left:274px;width:781px"><span style="left:3.5px;letter-spacing:-.23px">Packets: 83 Displayed: 5 Marked: 2 Dropped: 0</span></div>
<div class="sf" style="left:1059px;width:221px"><span style="left:3px;letter-spacing:.08px">Profile: Default</span></div>
<div class="grip"></div>
</div>
<div id="taskbar"><div class="lft"></div><div class="sd"></div><div class="orb"><i class="r"></i><i class="g"></i></div><div class="ti" style="left:72px;width:12px;background:#4aa0e8"></div><div class="ti" style="left:158px;width:5px;background:#e8a030"></div>
<div class="tb" style="left:179px;width:96px"><i style="left:6px;width:15px;background:#000"></i></div><div class="tb" style="left:277px;width:95px"><i style="left:7px;width:4px;background:#2a6ad0"></i><i style="left:11px;width:4px;background:#f4f4f8"></i><i style="left:16px;width:4px;background:#2a6ad0"></i></div><div class="tb" style="left:375px;width:96px"></div><div class="tb" style="left:473px;width:96px"></div><div class="tb" style="left:571px;width:96px"></div><div class="tb a" style="left:669px;width:94px"></div><div class="tb" style="left:766px;width:95px"></div><div class="tb" style="left:863px;width:95px"></div><div class="tb" style="left:960px;width:95px"></div>
</div>

</body></html>
